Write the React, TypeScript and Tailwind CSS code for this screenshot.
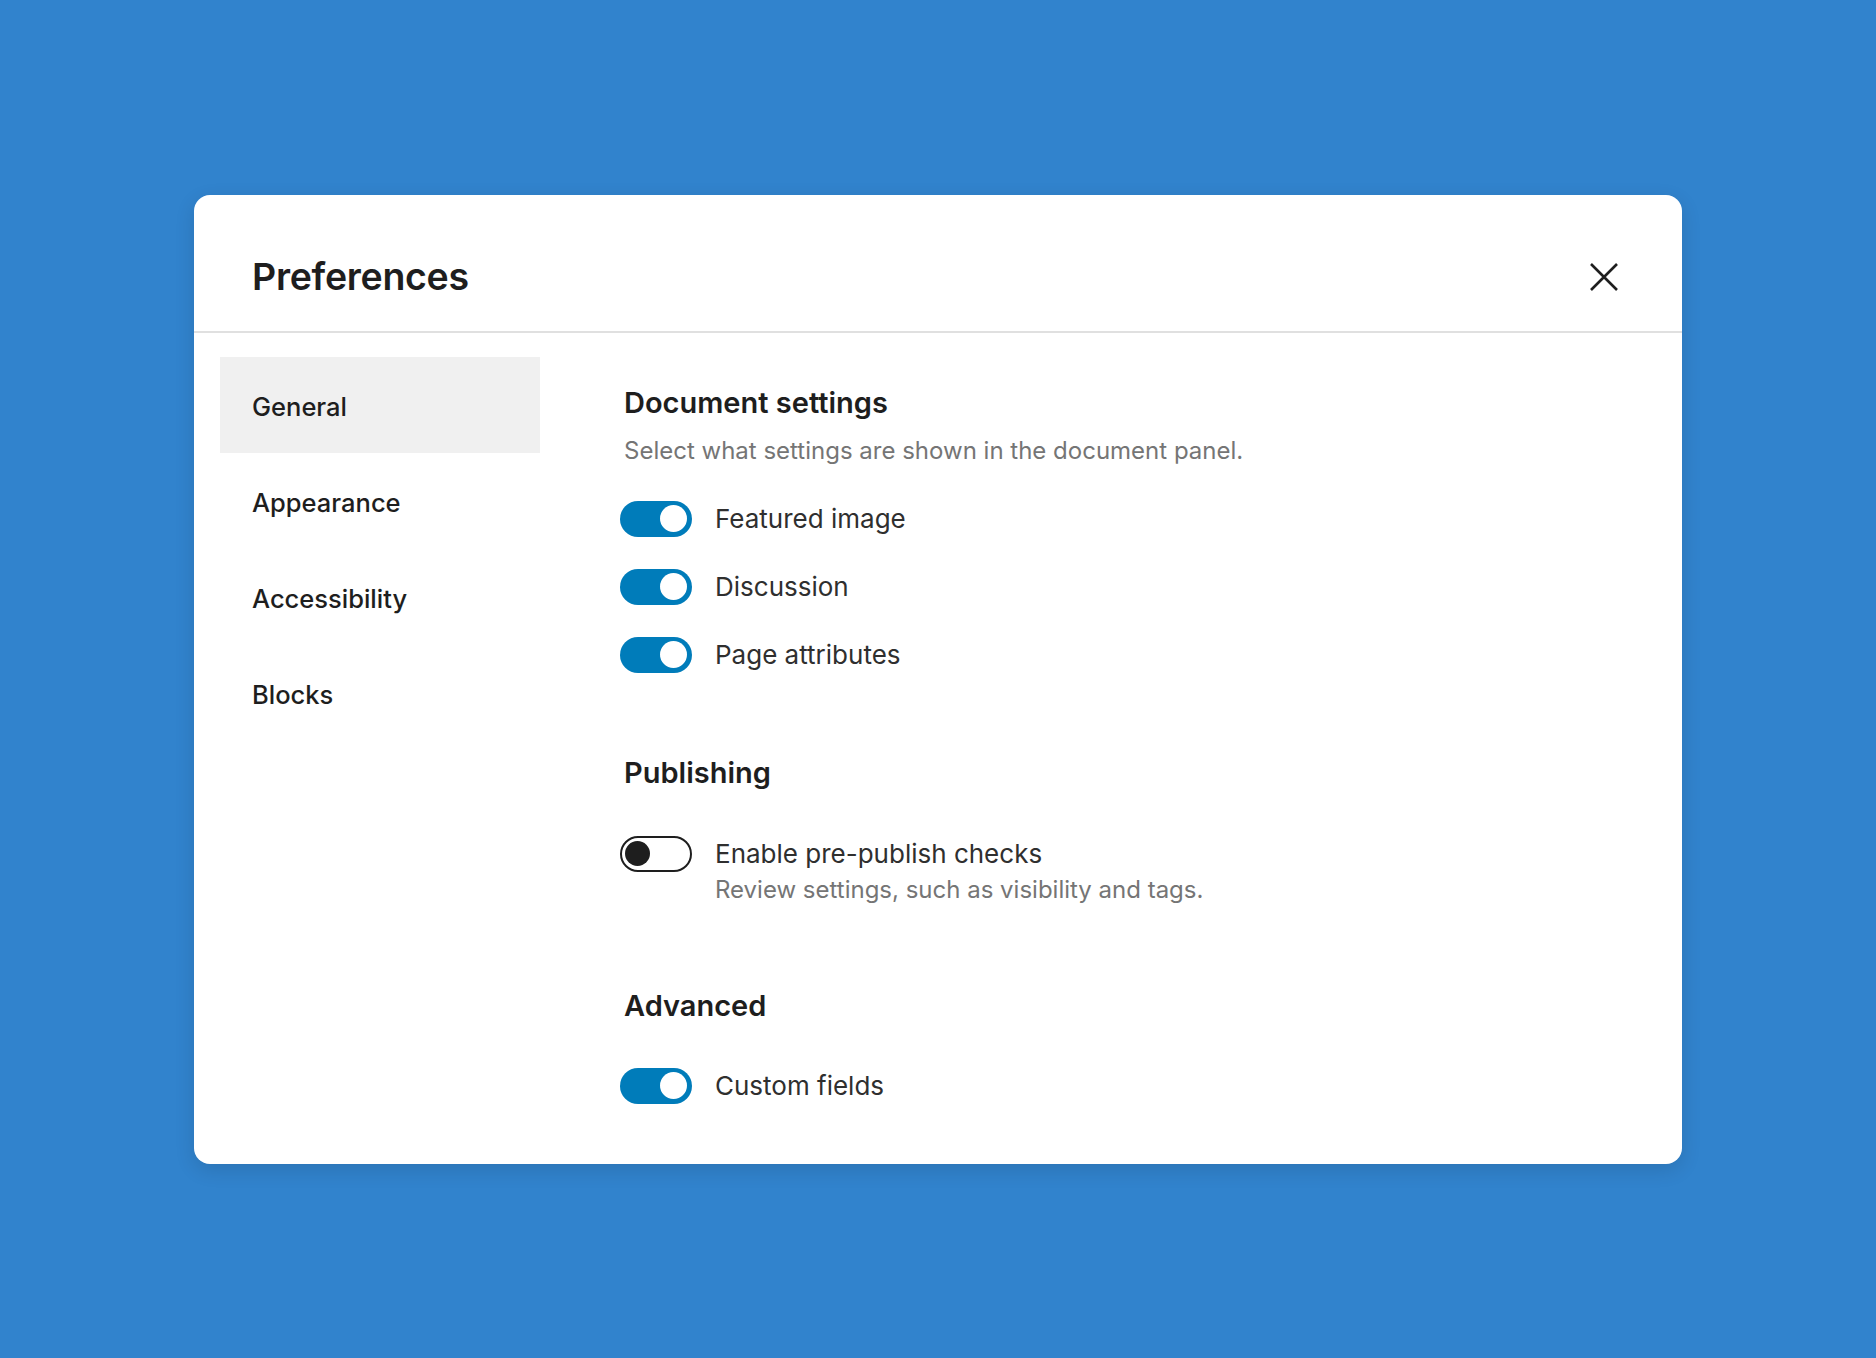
import { useState } from "react"

const navItems = ["General", "Appearance", "Accessibility", "Blocks"]

type ToggleProps = { on: boolean; onChange: () => void }

const Toggle = ({ on, onChange }: ToggleProps) => (
    <button
        type="button"
        onClick={onChange}
        className={
            on
                ? "flex h-[36px] w-[72px] shrink-0 items-center justify-end rounded-full bg-[#007cba] pr-[5px]"
                : "flex h-[36px] w-[72px] shrink-0 items-center justify-start rounded-full border-[2.5px] border-[#1e1e1e] bg-white pl-[3px]"
        }
    >
        <span className={on ? "h-[27px] w-[27px] rounded-full bg-white" : "h-[25px] w-[25px] rounded-full bg-[#1e1e1e]"} />
    </button>
)

const ToggleRow = ({ label, help, on, onChange }: { label: string; help?: string; on: boolean; onChange: () => void }) => (
    <div className="flex items-start gap-[23px]">
        <Toggle on={on} onChange={onChange} />
        <div className="flex flex-col">
            <span className="text-[26px] leading-[36px] text-[#2f2f2f]">{label}</span>
            {help && <span className="mt-[3px] text-[24px] leading-[30px] text-[#757575]">{help}</span>}
        </div>
    </div>
)

const App = () => {
    const [active, setActive] = useState("General")
    const [opts, setOpts] = useState<Record<string, boolean>>({
        featured: true,
        discussion: true,
        attributes: true,
        prepublish: false,
        custom: true,
    })
    const flip = (k: string) => setOpts((o) => ({ ...o, [k]: !o[k] }))

    return (
        <div className="flex min-h-[1358px] items-center justify-center bg-[#3183cd] font-['Inter',sans-serif]">
            <div className="flex h-[969px] w-[1488px] flex-col rounded-[16px] bg-white shadow-[0_6px_20px_rgba(0,0,0,0.12)]">
                <header className="flex items-center justify-between border-b-2 border-[#e0e0e0] pl-[58px] pr-[58px] pt-[57px] pb-[29px]">
                    <h1 className="text-[37.5px] font-semibold leading-[50px] tracking-[-0.3px] text-[#1e1e1e]">Preferences</h1>
                    <button type="button" className="flex h-[40px] w-[40px] items-center justify-center">
                        <svg width="30" height="30" viewBox="0 0 30 30" fill="none" stroke="#1e1e1e" strokeWidth="2.6">
                            <path d="M2 2 L28 28 M28 2 L2 28" />
                        </svg>
                    </button>
                </header>
                <div className="flex flex-1 pl-[26px] pt-[24px]">
                    <nav className="flex w-[320px] flex-col">
                        {navItems.map((item) => (
                            <button
                                key={item}
                                type="button"
                                onClick={() => setActive(item)}
                                className={
                                    (active === item ? "bg-[#f0f0f0] " : "") +
                                    "h-[96px] pl-[32px] pt-[6px] text-left text-[25.5px] font-medium text-[#1e1e1e]"
                                }
                            >
                                {item}
                            </button>
                        ))}
                    </nav>
                    <main className="ml-[80px] flex flex-col pt-[30px]">
                        <h2 className="pl-[4px] text-[29px] font-semibold leading-[32px] text-[#1e1e1e]">Document settings</h2>
                        <p className="mt-[17px] pl-[4px] text-[24px] leading-[30px] text-[#757575]">
                            Select what settings are shown in the document panel.
                        </p>
                        <div className="mt-[35px] flex flex-col gap-[32px]">
                            <ToggleRow label="Featured image" on={opts.featured} onChange={() => flip("featured")} />
                            <ToggleRow label="Discussion" on={opts.discussion} onChange={() => flip("discussion")} />
                            <ToggleRow label="Page attributes" on={opts.attributes} onChange={() => flip("attributes")} />
                        </div>

                        <h2 className="mt-[84px] pl-[4px] text-[29px] font-semibold leading-[32px] text-[#1e1e1e]">Publishing</h2>
                        <div className="mt-[47px]">
                            <ToggleRow
                                label="Enable pre-publish checks"
                                help="Review settings, such as visibility and tags."
                                on={opts.prepublish}
                                onChange={() => flip("prepublish")}
                            />
                        </div>

                        <h2 className="mt-[85px] pl-[4px] text-[29px] font-semibold leading-[32px] text-[#1e1e1e]">Advanced</h2>
                        <div className="mt-[46px]">
                            <ToggleRow label="Custom fields" on={opts.custom} onChange={() => flip("custom")} />
                        </div>
                    </main>
                </div>
            </div>
        </div>
    )
}

export default App
